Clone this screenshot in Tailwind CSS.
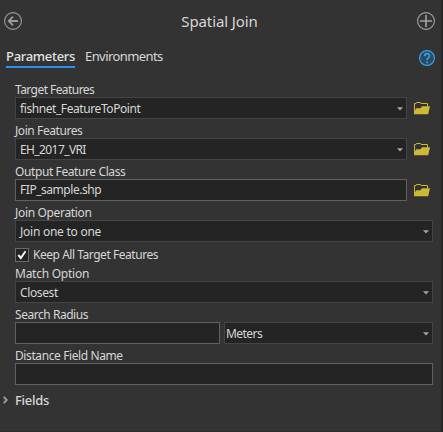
<!DOCTYPE html>
<html lang="en">
<head>
<meta charset="utf-8">
<title>Spatial Join</title>
<script src="https://cdn.jsdelivr.net/npm/@tailwindcss/browser@4"></script>
</head>
<body class="bg-[#333333]">
<svg class="hidden">
  <symbol id="folder" viewBox="0 0 16 13">
    <path d="M.5 11.5V1.5H2L2.5.5H6.5L7 1.5H13.5V4.5" fill="none" stroke="#cdb935"/>
    <path d="M0 12.2V11L2 6.2H6.5L8 4.2H16L14.2 12.2Z" fill="#cdb935"/>
  </symbol>
  <symbol id="caret" viewBox="0 0 6 4"><path d="M0 .3H6L3 3.5Z" fill="#a6a6a6"/></symbol>
</svg>
<div class="flex h-[432px] w-[443px] flex-col overflow-hidden border-r-2 border-b border-r-[#27272a] border-b-[#2b2b2d] bg-[#333333] font-['Noto_Sans','Open_Sans',sans-serif] text-[12px] whitespace-nowrap text-[#d6d6d6]">
  <header class="flex h-[42px] items-center justify-between pl-1 pr-[6px]">
    <svg class="size-[18px]" viewBox="0 0 18 18" fill="none" stroke="#9b9b9b"><circle cx="9" cy="9" r="8.4" stroke-width="1.1"/><path d="M14 9H5M9 4.7L4.7 9L9 13.3" stroke-width="1.8"/></svg>
    <h1 class="text-[15px] tracking-[-0.1px]">Spatial Join</h1>
    <svg class="size-[18px]" viewBox="0 0 18 18" fill="none" stroke="#a3a3a3"><circle cx="9" cy="9" r="8.4" stroke-width="1.1"/><path d="M3 9H15M9 3V15" stroke-width="1.6"/></svg>
  </header>
  <nav class="flex h-9 items-start justify-between pl-[6px] pr-[6px] text-[13px]">
    <div class="flex gap-[10px] pt-1">
      <span class="h-[22px] w-[69px] border-b-2 border-[#2b93ee] leading-[21px] font-medium tracking-[-0.3px] text-[#e2e2e2]">Parameters</span>
      <span class="leading-[21px] tracking-[-0.58px]">Environments</span>
    </div>
    <svg class="mt-2 size-4" viewBox="0 0 16 16" fill="none" stroke="#3f9fdc"><circle cx="8" cy="8" r="7.4" fill="#254b69" stroke-width="1.2"/><path d="M5.5 6.2C5.5 2.8 10.6 2.8 10.6 5.8C10.6 7.8 8 7.7 8 10M8 11.5V13.2" stroke-width="1.6"/></svg>
  </nav>
  <main class="flex flex-col pl-[15px] pr-2">
    <label class="h-[19px] pt-[3px] leading-[18px] tracking-[-0.56px]">Target Features</label>
    <div class="flex items-center">
      <div class="flex h-[22px] w-[392px] items-center justify-between border border-[#444444] bg-[#242424] pt-[2px] pl-1 pr-[3px]"><span class="tracking-[-0.42px]">fishnet_FeatureToPoint</span><svg class="h-1 w-[6px]"><use href="#caret"/></svg></div>
      <svg class="ml-[7px] h-[13px] w-4"><use href="#folder"/></svg>
    </div>
    <label class="h-[19px] pt-[3px] leading-[18px] tracking-[-0.42px]">Join Features</label>
    <div class="flex items-center">
      <div class="flex h-[22px] w-[392px] items-center justify-between border border-[#444444] bg-[#242424] pt-[2px] pl-1 pr-[3px]"><span class="tracking-[-0.6px]">EH_2017_VRI</span><svg class="h-1 w-[6px]"><use href="#caret"/></svg></div>
      <svg class="ml-[7px] h-[13px] w-4"><use href="#folder"/></svg>
    </div>
    <label class="h-[19px] pt-[3px] leading-[18px] tracking-[-0.4px]">Output Feature Class</label>
    <div class="flex items-center">
      <div class="flex h-[22px] w-[392px] items-center border border-[#606060] bg-[#242424] pl-1"><span class="tracking-[-0.46px]">FIP_sample.shp</span></div>
      <svg class="ml-[7px] h-[13px] w-4"><use href="#folder"/></svg>
    </div>
    <label class="h-[19px] pt-[3px] leading-[18px] tracking-[-0.33px]">Join Operation</label>
    <div class="flex h-[22px] items-center justify-between border border-[#444444] bg-[#242424] pt-[2px] pl-1 pr-[3px]"><span class="tracking-[-0.25px]">Join one to one</span><svg class="h-1 w-[6px]"><use href="#caret"/></svg></div>
    <div class="flex h-5 items-center gap-1 pt-[5px]">
      <svg class="size-[14px]" viewBox="0 0 14 14" fill="none"><rect x=".5" y=".5" width="13" height="13" fill="#242424" stroke="#6a6a6a"/><path d="M3.3 7L5.8 10L10.5 3.2" stroke="#f2f2f2" stroke-width="2"/></svg>
      <span class="tracking-[-0.46px]">Keep All Target Features</span>
    </div>
    <label class="h-[19px] pt-[3px] leading-[18px] tracking-[-0.25px]">Match Option</label>
    <div class="flex h-[22px] items-center justify-between border border-[#444444] bg-[#242424] pt-[2px] pl-1 pr-[3px]"><span class="tracking-[-0.38px]">Closest</span><svg class="h-1 w-[6px]"><use href="#caret"/></svg></div>
    <label class="h-[19px] pt-[3px] leading-[18px] tracking-[-0.46px]">Search Radius</label>
    <div class="flex gap-1">
      <div class="h-[22px] w-[205px] border border-[#606060] bg-[#242424]"></div>
      <div class="flex h-[22px] flex-1 items-center justify-between border border-[#444444] bg-[#242424] pt-[2px] pl-px pr-[3px]"><span class="tracking-[-0.55px]">Meters</span><svg class="h-1 w-[6px]"><use href="#caret"/></svg></div>
    </div>
    <label class="h-[19px] pt-[3px] leading-[18px] tracking-[-0.4px]">Distance Field Name</label>
    <div class="h-[22px] border border-[#606060] bg-[#242424]"></div>
  </main>
  <div class="flex h-[30px] items-center gap-[7px] pl-[3px] text-[13px] font-medium">
    <svg class="h-2 w-[5px]" viewBox="0 0 5 8" fill="none" stroke="#a0a0a0" stroke-width="1.8"><path d="M.7 .8L3.8 4L.7 7.2"/></svg>
    <span class="pt-[2px] tracking-[-0.3px]">Fields</span>
  </div>
</div>
</body>
</html>
